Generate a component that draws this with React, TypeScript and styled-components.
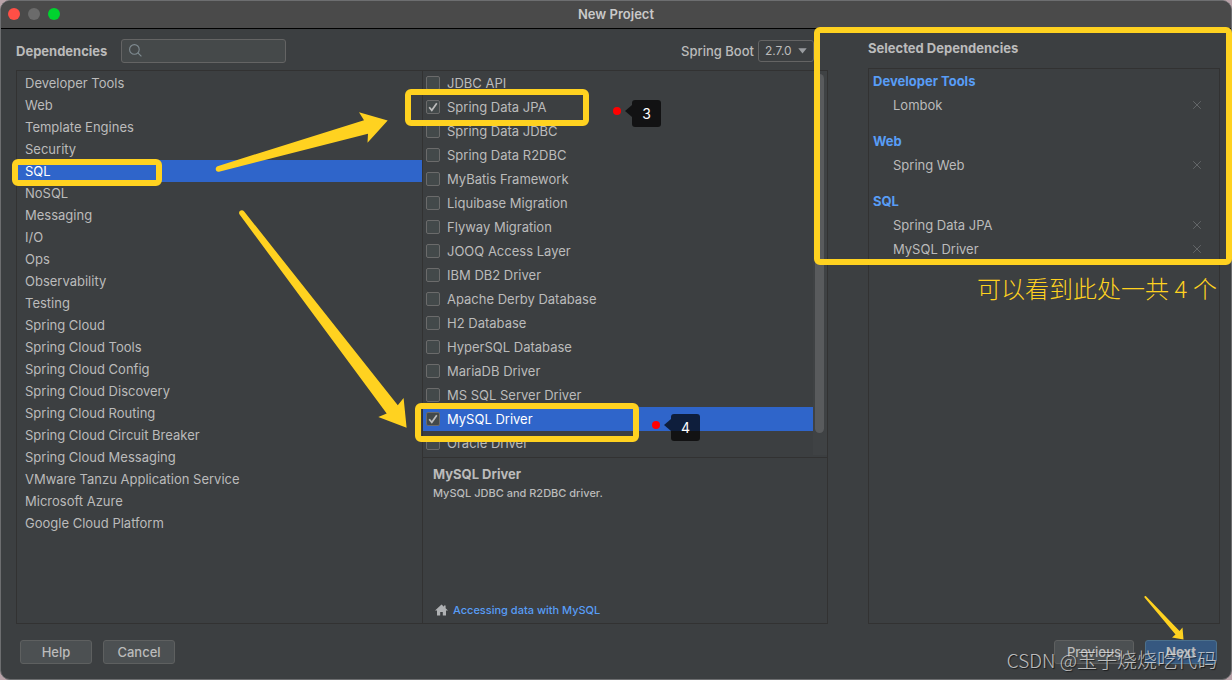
import React, { useState } from "react";
import styled, { createGlobalStyle, css } from "styled-components";

const YELLOW = "#ffd220";
const BG = "#3c3f41";
const LINE = "#323232";
const TEXT = "#bbbbbb";
const BLUE = "#2f65ca";
const LINK = "#589df6";

const GlobalStyle = createGlobalStyle`
  *, *::before, *::after { box-sizing: border-box; }
  body {
    margin: 0;
    background: #b9a3a9;
    color: ${TEXT};
    font: 400 13px/22px Inter, "Noto Sans CJK SC", sans-serif;
  }
  button, input, select { font: inherit; color: inherit; }
  h1, h2, h3, p, ul { margin: 0; padding: 0; font-size: inherit; }
  ul { list-style: none; }
`;

const Window = styled.div`
  position: relative;
  display: flex;
  flex-direction: column;
  min-height: 100vh;
  background: ${BG};
  border: 1px solid #6d6e70;
  border-radius: 10px;
`;

const TitleBar = styled.header`
  display: grid;
  grid-template-columns: 1fr auto 1fr;
  align-items: center;
  height: 28px;
  padding: 0 7px 2px;
  background: #4a4a4a;
  border-bottom: 1px solid #000;
  border-radius: 9px 9px 0 0;
`;

const Title = styled.h1`
  font-weight: 600;
  color: #c9c9c9;
`;

const Lights = styled.div`
  display: flex;
  gap: 8px;
`;

const Light = styled.button<{ $color: string }>`
  width: 12px;
  height: 12px;
  padding: 0;
  border: 0;
  border-radius: 50%;
  background: ${(p) => p.$color};
`;

const Main = styled.main`
  flex: 1;
  display: flex;
  gap: 40px;
  padding: 0 11px 0 15px;
`;

const Chooser = styled.section`
  flex: 812 1 0;
  min-width: 0;
  display: flex;
  flex-direction: column;
`;

const Toolbar = styled.div`
  display: flex;
  align-items: center;
  height: 41px;
  padding: 2px 14px 0 0;
`;

const Heading = styled.h2`
  font-weight: 700;
`;

const SearchBox = styled.label`
  display: flex;
  align-items: center;
  gap: 4px;
  width: 165px;
  height: 24px;
  margin-left: 14px;
  padding-left: 7px;
  background: #45494a;
  border: 1px solid #646464;
  border-radius: 3px;
`;

const SearchInput = styled.input`
  flex: 1;
  min-width: 0;
  border: 0;
  outline: 0;
  padding: 0;
  background: transparent;
`;

const VersionLabel = styled.label`
  margin-left: auto;
  margin-right: 4px;
  font-weight: 500;
`;

const SelectWrap = styled.div`
  display: grid;
  align-items: center;
  & > * { grid-area: 1 / 1; }
  svg { justify-self: end; margin-right: 7px; pointer-events: none; }
`;

const Select = styled.select`
  appearance: none;
  width: 56px;
  height: 22px;
  padding: 0 0 0 6px;
  background: ${BG};
  border: 1px solid #646464;
  border-radius: 3px;
  font-size: 12px;
  line-height: 20px;
`;

const Panes = styled.div`
  flex: 1;
  display: grid;
  grid-template-columns: 1fr 1fr;
  border: 1px solid ${LINE};
`;

const CategoryList = styled.ul`
  padding-top: 1px;
`;

const CategoryItem = styled.li`
  position: relative;
`;

const CategoryButton = styled.button<{ $active: boolean }>`
  display: block;
  width: 100%;
  height: 22px;
  padding: 0 8px;
  border: 0;
  text-align: left;
  background: ${(p) => (p.$active ? BLUE : "transparent")};
  color: ${(p) => (p.$active ? "#fff" : TEXT)};
`;

const RightPane = styled.div`
  display: flex;
  flex-direction: column;
  border-left: 1px solid ${LINE};
`;

const DependencyArea = styled.div`
  display: flex;
  padding-bottom: 2px;
  border-bottom: 1px solid ${LINE};
`;

const DependencyList = styled.ul`
  flex: 1;
`;

const Track = styled.div`
  width: 14px;
  padding: 3px 3px 22px 2px;
  background: #3f4244;
`;

const Thumb = styled.div`
  height: 100%;
  background: #595b5d;
  border-radius: 5px;
`;

const DependencyItem = styled.li<{ $active: boolean }>`
  position: relative;
  background: ${(p) => (p.$active ? BLUE : "transparent")};
  color: ${(p) => (p.$active ? "#fff" : TEXT)};
`;

const DependencyLabel = styled.label`
  display: flex;
  align-items: center;
  gap: 7px;
  height: 24px;
  padding-left: 3px;
`;

const CheckWrap = styled.span`
  display: grid;
  width: 14px;
  height: 14px;
  & > * { grid-area: 1 / 1; }
  svg { pointer-events: none; }
`;

const Checkbox = styled.input`
  appearance: none;
  width: 14px;
  height: 14px;
  margin: 0;
  background: #43494a;
  border: 1px solid #6b6b6b;
  border-radius: 2px;
`;

const Details = styled.div`
  flex: 1;
  display: flex;
  flex-direction: column;
  padding: 5px 10px 2px;
`;

const Description = styled.p`
  font-size: 11px;
  font-weight: 500;
  line-height: 16px;
`;

const GuideLink = styled.a`
  display: flex;
  align-items: center;
  gap: 5px;
  margin-top: auto;
  padding-left: 2px;
  color: ${LINK};
  font-size: 11px;
  font-weight: 500;
  text-decoration: none;
`;

const Selected = styled.section`
  position: relative;
  flex: 352 1 0;
  min-width: 0;
  display: flex;
  flex-direction: column;
`;

const SelectedHeader = styled.div`
  display: flex;
  align-items: center;
  height: 39px;
  padding-bottom: 2px;
`;

const SelectedPanel = styled.div`
  flex: 1;
  display: flex;
  flex-direction: column;
  gap: 12px;
  padding: 0 15px 0 4px;
  border: 1px solid ${LINE};
`;

const GroupTitle = styled.h3`
  color: ${LINK};
  font-weight: 700;
  line-height: 24px;
`;

const SelectedRow = styled.li`
  display: flex;
  align-items: center;
  justify-content: space-between;
  height: 24px;
  padding-left: 20px;
`;

const RemoveButton = styled.button`
  display: grid;
  place-items: center;
  width: 14px;
  height: 14px;
  padding: 0;
  border: 0;
  background: none;
  color: #636668;
`;

const Footer = styled.footer`
  display: flex;
  gap: 11px;
  padding: 16px 14px 15px 19px;
`;

const FooterButton = styled.button<{ $primary?: boolean; $wide?: boolean; $push?: boolean }>`
  width: ${(p) => (p.$wide ? 80 : 72)}px;
  height: 24px;
  padding: 0;
  border: 1px solid #5e6060;
  border-radius: 3px;
  background: #4c5052;
  font-weight: 500;
  ${(p) => p.$push && css`margin-left: auto;`}
  ${(p) =>
    p.$primary &&
    css`
      background: #365880;
      border-color: #4c708c;
      font-weight: 700;
    `}
`;

const Mark = styled.span<{ $left: number; $top: number; $width?: number; $height: number; $right?: number }>`
  position: absolute;
  z-index: 2;
  left: ${(p) => p.$left}px;
  top: ${(p) => p.$top}px;
  height: ${(p) => p.$height}px;
  ${(p) => (p.$width ? `width: ${p.$width}px;` : `right: ${p.$right}px;`)}
  border: 6px solid ${YELLOW};
  border-radius: 6px;
  pointer-events: none;
`;

const Callout = styled.span<{ $left: number; $top: number }>`
  position: absolute;
  z-index: 2;
  left: ${(p) => p.$left}px;
  top: ${(p) => p.$top}px;
  display: flex;
  align-items: flex-start;
  pointer-events: none;
`;

const Dot = styled.span`
  width: 8px;
  height: 8px;
  margin: 7px 4px 0 0;
  border-radius: 50%;
  background: #f00;
`;

const Pointer = styled.span`
  margin-top: 5px;
  border: solid transparent;
  border-width: 6px 7px 6px 0;
  border-right-color: rgba(0, 0, 0, 0.7);
`;

const Bubble = styled.span`
  width: 29px;
  height: 27px;
  border-radius: 3px;
  background: rgba(0, 0, 0, 0.7);
  color: #fff;
  font-size: 14px;
  line-height: 28px;
  text-align: center;
`;

const Note = styled.p`
  position: absolute;
  z-index: 2;
  right: 3px;
  top: 241px;
  color: ${YELLOW};
  font: 300 24px/36px "Noto Sans CJK SC", sans-serif;
  white-space: nowrap;
`;

const NoteDigit = styled.span`
  display: inline-block;
  width: 24px;
  text-align: center;
`;

const Arrows = styled.svg`
  position: absolute;
  z-index: 3;
  left: -1px;
  top: -1px;
  pointer-events: none;
`;

const NextArrow = styled.svg`
  position: absolute;
  z-index: 3;
  right: 47px;
  bottom: 39px;
  pointer-events: none;
`;

const Watermark = styled.p`
  position: absolute;
  z-index: 4;
  right: 14px;
  bottom: 4px;
  color: rgba(225, 225, 225, 0.8);
  font: 300 20px/30px "Noto Sans CJK SC", sans-serif;
  text-shadow: 1px 1px 1px rgba(0, 0, 0, 0.6);
  white-space: nowrap;
  pointer-events: none;
`;

const WatermarkSite = styled.span`
  font-size: 19px;
`;

const categories = [
  "Developer Tools", "Web", "Template Engines", "Security", "SQL", "NoSQL", "Messaging", "I/O", "Ops",
  "Observability", "Testing", "Spring Cloud", "Spring Cloud Tools", "Spring Cloud Config",
  "Spring Cloud Discovery", "Spring Cloud Routing", "Spring Cloud Circuit Breaker",
  "Spring Cloud Messaging", "VMware Tanzu Application Service", "Microsoft Azure", "Google Cloud Platform",
];

const dependencies = [
  "JDBC API", "Spring Data JPA", "Spring Data JDBC", "Spring Data R2DBC", "MyBatis Framework",
  "Liquibase Migration", "Flyway Migration", "JOOQ Access Layer", "IBM DB2 Driver",
  "Apache Derby Database", "H2 Database", "HyperSQL Database", "MariaDB Driver",
  "MS SQL Server Driver", "MySQL Driver", "Oracle Driver",
];

const groups = [
  { title: "Developer Tools", items: ["Lombok"] },
  { title: "Web", items: ["Spring Web"] },
  { title: "SQL", items: ["Spring Data JPA", "MySQL Driver"] },
];

export default function App() {
  const [category, setCategory] = useState("SQL");
  const [checked, setChecked] = useState(["Spring Data JPA", "MySQL Driver"]);
  const toggle = (name: string) =>
    setChecked((list) => (list.includes(name) ? list.filter((n) => n !== name) : [...list, name]));

  return (
    <>
      <GlobalStyle />
      <Window>
        <TitleBar>
          <Lights>
            <Light $color="#ff4f46" aria-label="Close" />
            <Light $color="#6b6b6b" aria-label="Minimize" />
            <Light $color="#00d32f" aria-label="Zoom" />
          </Lights>
          <Title>New Project</Title>
        </TitleBar>

        <Main>
          <Chooser>
            <Toolbar>
              <Heading>Dependencies</Heading>
              <SearchBox>
                <svg width="13" height="13" viewBox="0 0 13 13" fill="none" stroke="#7f8b91" strokeWidth="1.1" aria-hidden="true">
                  <circle cx="5.4" cy="5.4" r="4.8" />
                  <path d="M8.9 8.9L12.4 12.4" />
                </svg>
                <SearchInput type="text" aria-label="Search dependencies" />
              </SearchBox>
              <VersionLabel htmlFor="version">Spring Boot</VersionLabel>
              <SelectWrap>
                <Select id="version" defaultValue="2.7.0">
                  <option>2.7.0</option>
                </Select>
                <svg width="9" height="6" viewBox="0 0 9 6" aria-hidden="true">
                  <path d="M0.3 0.3H8.7L4.5 5.6Z" fill="#9a9da0" />
                </svg>
              </SelectWrap>
            </Toolbar>
            <Panes>
              <CategoryList>
                {categories.map((name) => (
                  <CategoryItem key={name}>
                    <CategoryButton $active={name === category} onClick={() => setCategory(name)}>
                      {name}
                    </CategoryButton>
                    {name === "SQL" && <Mark $left={-5} $top={-1} $width={150} $height={27} />}
                  </CategoryItem>
                ))}
              </CategoryList>
              <RightPane>
                <DependencyArea>
                  <DependencyList>
                    {dependencies.map((name) => (
                      <DependencyItem key={name} $active={name === "MySQL Driver"}>
                        <DependencyLabel>
                          <CheckWrap>
                            <Checkbox type="checkbox" checked={checked.includes(name)} onChange={() => toggle(name)} />
                            {checked.includes(name) && (
                              <svg width="14" height="14" viewBox="0 0 14 14" fill="none" stroke="#bdbdbd" strokeWidth="1.7" aria-hidden="true">
                                <path d="M3.2 7.2L5.8 10.3L10.8 3.3" />
                              </svg>
                            )}
                          </CheckWrap>
                          {name}
                        </DependencyLabel>
                        {name === "Spring Data JPA" && (
                          <>
                            <Mark $left={-18} $top={-6} $width={184} $height={37} />
                            <Callout $left={190} $top={5}>
                              <Dot />
                              <Pointer />
                              <Bubble>3</Bubble>
                            </Callout>
                          </>
                        )}
                        {name === "MySQL Driver" && (
                          <>
                            <Mark $left={-8} $top={-4} $width={224} $height={39} />
                            <Callout $left={229} $top={7}>
                              <Dot />
                              <Pointer />
                              <Bubble>4</Bubble>
                            </Callout>
                          </>
                        )}
                      </DependencyItem>
                    ))}
                  </DependencyList>
                  <Track>
                    <Thumb />
                  </Track>
                </DependencyArea>
                <Details>
                  <Heading as="h3">MySQL Driver</Heading>
                  <Description>MySQL JDBC and R2DBC driver.</Description>
                  <GuideLink href="#guide">
                    <svg width="13" height="12" viewBox="0 0 13 12" fill="#afb1b3" aria-hidden="true">
                      <path d="M6.5 0.4L0 6.6H2V11.5H5.2V8H7.8V11.5H11V6.6H13L10.6 4.3V1.4H9V2.8Z" />
                    </svg>
                    Accessing data with MySQL
                  </GuideLink>
                </Details>
              </RightPane>
            </Panes>
          </Chooser>

          <Selected>
            <SelectedHeader>
              <Heading>Selected Dependencies</Heading>
            </SelectedHeader>
            <SelectedPanel>
              {groups.map((group) => (
                <div key={group.title}>
                  <GroupTitle>{group.title}</GroupTitle>
                  <ul>
                    {group.items.map((item) => (
                      <SelectedRow key={item}>
                        {item}
                        <RemoveButton aria-label={`Remove ${item}`}>
                          <svg width="8" height="8" viewBox="0 0 8 8" stroke="currentColor" aria-hidden="true">
                            <path d="M0.2 0.2L7.8 7.8M7.8 0.2L0.2 7.8" />
                          </svg>
                        </RemoveButton>
                      </SelectedRow>
                    ))}
                  </ul>
                </div>
              ))}
            </SelectedPanel>
            <Mark $left={-54} $right={-12} $top={-2} $height={238} />
            <Note>
              可以看到此处一共<NoteDigit>4</NoteDigit>个
            </Note>
          </Selected>
        </Main>

        <Footer>
          <FooterButton>Help</FooterButton>
          <FooterButton>Cancel</FooterButton>
          <FooterButton $wide $push>Previous</FooterButton>
          <FooterButton $primary>Next</FooterButton>
        </Footer>

        <Arrows width="420" height="440" viewBox="0 0 420 440" fill={YELLOW} aria-hidden="true">
          <path d="M217.5 166.2L364 120.2L359 112.3L387.7 120.5L367.5 142.7L368 133.7L219 171.7C215.500 172.300 214.500 167.500 217.500 166.200Z" />
          <path d="M239.600 214.500L386.700 413.500L378.300 417L406.600 427.800L403.600 398L397.800 405.200L244.200 211.500C241.800 208.700 237.600 211.500 239.600 214.500Z" />
        </Arrows>
        <NextArrow width="40" height="44" viewBox="0 0 40 44" fill={YELLOW} aria-hidden="true">
          <path d="M0.500 1.500L31.500 38.500L28 41.500L39.500 43.500L38.500 31.500L35.500 35L2 0.300C1 -0.300 0 0.500 0.500 1.500Z" />
        </NextArrow>
        <Watermark>
          <WatermarkSite>CSDN @</WatermarkSite>玉子烧烧吃代码
        </Watermark>
      </Window>
    </>
  );
}
